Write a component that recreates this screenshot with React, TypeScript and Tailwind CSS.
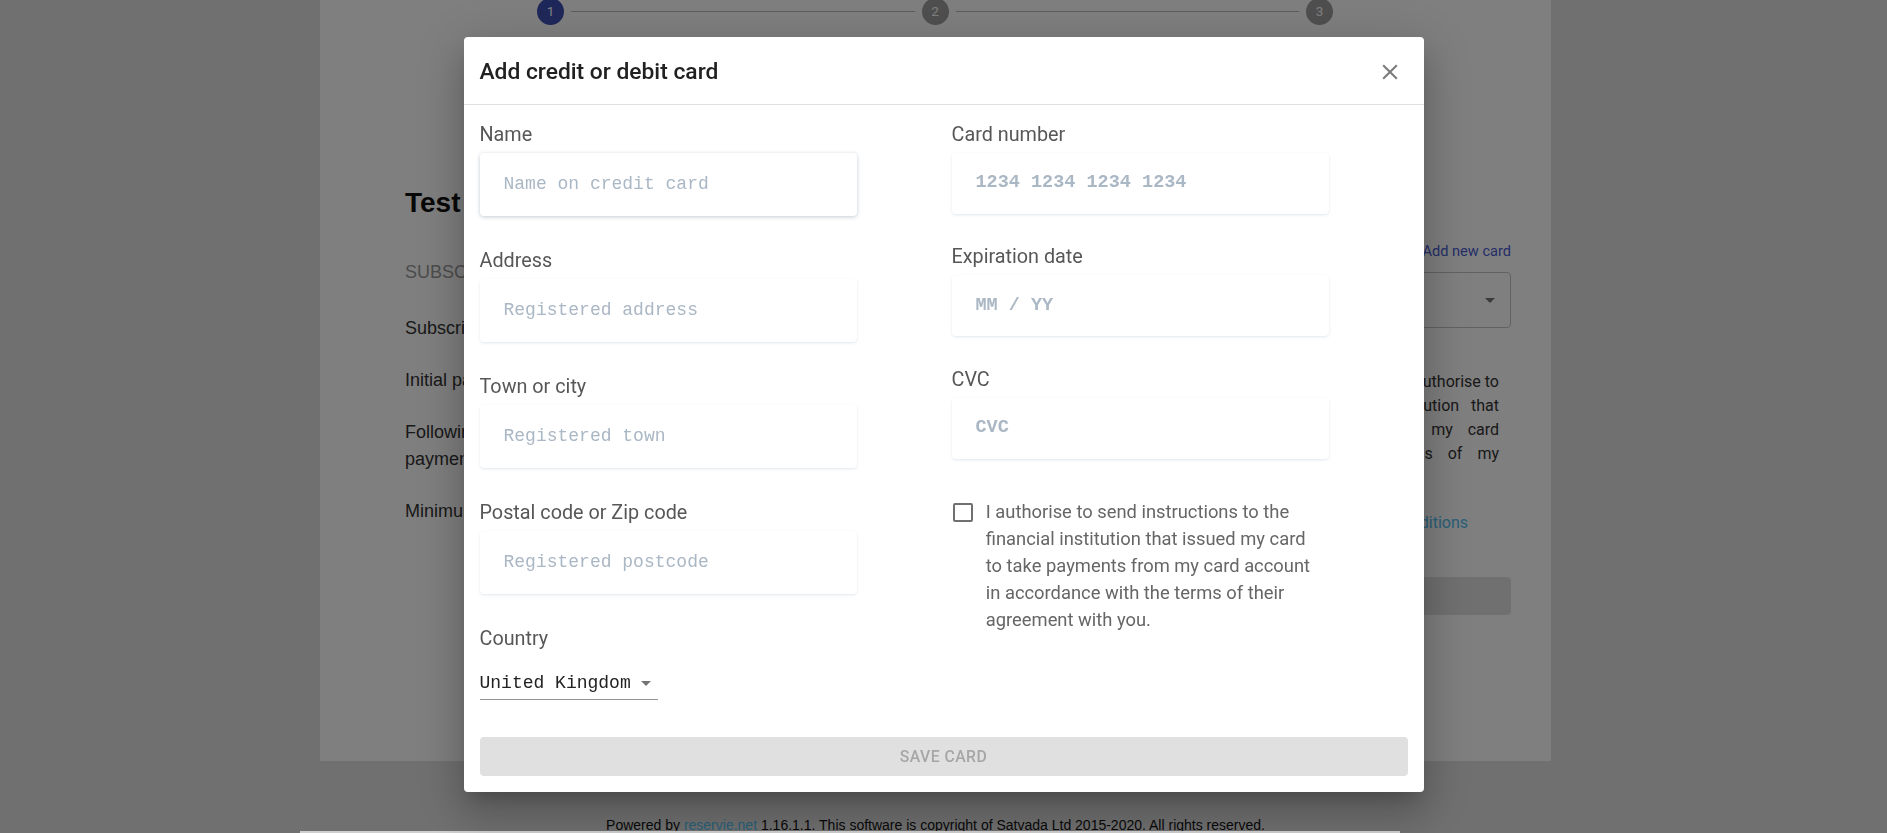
import React from "react";

const roboto = "font-['Roboto','Liberation_Sans',sans-serif]";
const mono = "font-['Liberation_Mono','Courier_New',monospace]";

function LeftField({ label, placeholder, focused }: { label: string; placeholder: string; focused?: boolean }) {
  return (
    <div className="mb-[32px] flex flex-col">
      <div className="h-[26px] text-[19.8px] leading-[26px] text-[#575757]">{label}</div>
      <div
        className={
          focused
            ? "mt-[5px] flex h-[63px] w-[377px] items-center rounded-[4px] bg-white pl-[24px] text-[18px] text-[#aab7c4] shadow-[0_1px_4px_0_#c3cbd4] font-['Liberation_Mono','Courier_New',monospace]"
            : "mt-[5px] flex h-[63px] w-[377px] items-center rounded-[4px] bg-white pl-[24px] text-[18px] text-[#aab7c4] shadow-[0_1px_3px_0_#e1e6ec] font-['Liberation_Mono','Courier_New',monospace]"
        }
      >
        {placeholder}
      </div>
    </div>
  );
}

function RightField({ label, placeholder }: { label: string; placeholder: string }) {
  return (
    <div className="mb-[30.5px] flex flex-col">
      <div className="h-[26px] text-[19.8px] leading-[26px] text-[#575757]">{label}</div>
      <div className="mt-[5px] flex h-[61px] w-[377px] items-center rounded-[4px] bg-white pl-[24px] text-[18.5px] font-bold text-[#aab7c4] shadow-[0_1px_3px_0_#e1e6ec] font-['Liberation_Mono','Courier_New',monospace]">
        {placeholder}
      </div>
    </div>
  );
}

function StepCircle({ n, active }: { n: number; active?: boolean }) {
  return (
    <div
      className={
        active
          ? "flex h-[27px] w-[27px] shrink-0 items-center justify-center rounded-full bg-[#3f51b5] text-[13.5px] text-white"
          : "flex h-[27px] w-[27px] shrink-0 items-center justify-center rounded-full bg-[#9e9e9e] text-[13.5px] text-white"
      }
    >
      {n}
    </div>
  );
}

export default function App() {
  return (
    <div className="relative h-[833px] w-full overflow-hidden bg-[#e0e0e0] font-['Liberation_Sans',Arial,sans-serif]">
      {/* Page behind the dialog */}
      <div className="ml-[320px] h-[763px] w-[1231px] bg-white">
        <div className={`-mt-[2px] ml-[217px] flex w-[796px] items-center ${roboto}`}>
          <StepCircle n={1} active />
          <div className="mx-[7px] h-px flex-1 bg-[#bdbdbd]" />
          <StepCircle n={2} />
          <div className="mx-[7px] h-px flex-1 bg-[#bdbdbd]" />
          <StepCircle n={3} />
        </div>

        <div className="mt-[161px] flex">
          <div className="ml-[85px] flex w-[520px] flex-col">
            <div className="text-[28px] font-bold leading-[34px] text-[#111]">Test Subscription Plan</div>
            <div className="mt-[38.5px] text-[18px] leading-[27px] text-[#999] uppercase">Subscription details</div>
            <div className="mt-[29.5px] text-[18px] leading-[27px] text-[#333]">Subscription: Test Subscription Plan</div>
            <div className="mt-[25px] text-[18px] leading-[27px] text-[#333]">Initial payment: £10.00 today</div>
            <div className="mt-[25px] text-[18px] leading-[27px] text-[#333]">
              Following payments: £10.00 every month, the next
              <br />
              payment is due one month from today
            </div>
            <div className="mt-[25px] text-[18px] leading-[27px] text-[#333]">Minimum term: 12 months</div>
          </div>

          <div className={`ml-auto mr-[40px] flex w-[480px] flex-col pt-[55px] ${roboto}`}>
            <div className="text-right text-[14.6px] leading-[20px] text-[#4a5cd0]">Add new card</div>
            <div className="mt-[10.7px] flex h-[56px] items-center justify-end rounded-[4px] border border-[#c4c4c4] pr-[8px]">
              <svg width="24" height="24" viewBox="0 0 24 24">
                <path d="M7 10l5 5 5-5z" fill="rgba(0,0,0,0.54)" />
              </svg>
            </div>
            <div className="mr-[12px] ml-auto mt-[42px] w-[420px] text-[16px] leading-[24px] text-[#333]">
              <div className="text-right">By adding this card to my account I authorise to</div>
              <div className="text-justify [text-align-last:justify]">send the instructions to the financial institution that</div>
              <div className="text-justify [text-align-last:justify]">issued my card to take payments from my card</div>
              <div className="text-justify [text-align-last:justify]">account in accordance with all the terms of my</div>
              <div>agreement with you.</div>
            </div>
            <div className="mt-[21px] pr-[43px] text-right text-[16px] leading-[24px] text-[#333]">
              I have read the <span className="text-[#52c0f0]">Terms and conditions</span>
            </div>
            <div className="mt-[42.3px] flex h-[38px] items-center justify-center rounded-[4px] bg-[#e0e0e0] text-[15px] font-medium text-[#a6a6a6]">
              SUBSCRIBE
            </div>
          </div>
        </div>
      </div>

      <div className="ml-[320px] mt-[55px] w-[1231px] text-center text-[14px] leading-[18px] text-[#111]">
        Powered by <span className="text-[#52c0f0]">reservie.net</span> 1.16.1.1. This software is copyright of Satvada Ltd 2015-2020. All rights reserved.
      </div>

      {/* Backdrop */}
      <div className="fixed inset-0 bg-black/50" />

      {/* Scrollbar strip */}
      <div className="absolute bottom-0 left-[300px] h-[2px] w-[1100px] bg-[#cfcfcf]" />

      {/* Dialog */}
      <div className="fixed inset-0 flex items-center justify-center pb-[4px]">
        <div
          className={`w-[960px] rounded-[4px] bg-white shadow-[0_11px_15px_-7px_rgba(0,0,0,0.2),0_24px_38px_3px_rgba(0,0,0,0.14),0_9px_46px_8px_rgba(0,0,0,0.12)] ${roboto}`}
        >
          <div className="flex h-[68px] items-center justify-between border-b border-[#e0e0e0] px-[16px] pt-[2px]">
            <div className="text-[22.8px] font-medium leading-[36px] text-[#212121]">Add credit or debit card</div>
            <svg className="mr-[5px]" width="26" height="26" viewBox="0 0 24 24">
              <path
                d="M19 6.41L17.59 5 12 10.59 6.41 5 5 6.41 10.59 12 5 17.59 6.41 19 12 13.41 17.59 19 19 17.59 13.41 12z"
                fill="#7d7d7d"
              />
            </svg>
          </div>

          <div className="flex flex-col px-[16px] pb-[16px] pt-[16.5px]">
            <div className="flex">
              <div className="flex w-[472px] flex-col">
                <LeftField label="Name" placeholder="Name on credit card" focused />
                <LeftField label="Address" placeholder="Registered address" />
                <LeftField label="Town or city" placeholder="Registered town" />
                <LeftField label="Postal code or Zip code" placeholder="Registered postcode" />
                <div className="h-[26px] text-[19.8px] leading-[26px] text-[#575757]">Country</div>
                <div className={`mt-[19.4px] flex h-[29px] w-[178px] border-b border-[#949494] pb-[4px] ${mono}`}>
                  <span className="text-[18px] leading-[24px] text-[#222]">United Kingdom</span>
                  <svg className="ml-auto shrink-0" width="24" height="24" viewBox="0 0 24 24">
                    <path d="M7 10l5 5 5-5z" fill="rgba(0,0,0,0.54)" />
                  </svg>
                </div>
              </div>

              <div className="flex w-[456px] flex-col">
                <RightField label="Card number" placeholder="1234 1234 1234 1234" />
                <RightField label="Expiration date" placeholder="MM / YY" />
                <RightField label="CVC" placeholder="CVC" />
                <div className="mt-[9px] flex w-[377px]">
                  <div className="ml-[1.7px] mt-[4.5px] h-[19.6px] w-[19.6px] shrink-0 rounded-[2px] border-2 border-[#707070]" />
                  <div className="ml-[13px] text-[18.35px] leading-[27px] text-[#666]">
                    I authorise to send instructions to the
                    <br />
                    financial institution that issued my card
                    <br />
                    to take payments from my card account
                    <br />
                    in accordance with the terms of their
                    <br />
                    agreement with you.
                  </div>
                </div>
              </div>
            </div>

            <div className="mt-[37px] flex h-[39px] w-full items-center justify-center rounded-[4px] bg-[#e0e0e0] text-[15.75px] font-medium tracking-[0.45px] text-[#a6a6a6]">
              SAVE CARD
            </div>
          </div>
        </div>
      </div>
    </div>
  );
}
